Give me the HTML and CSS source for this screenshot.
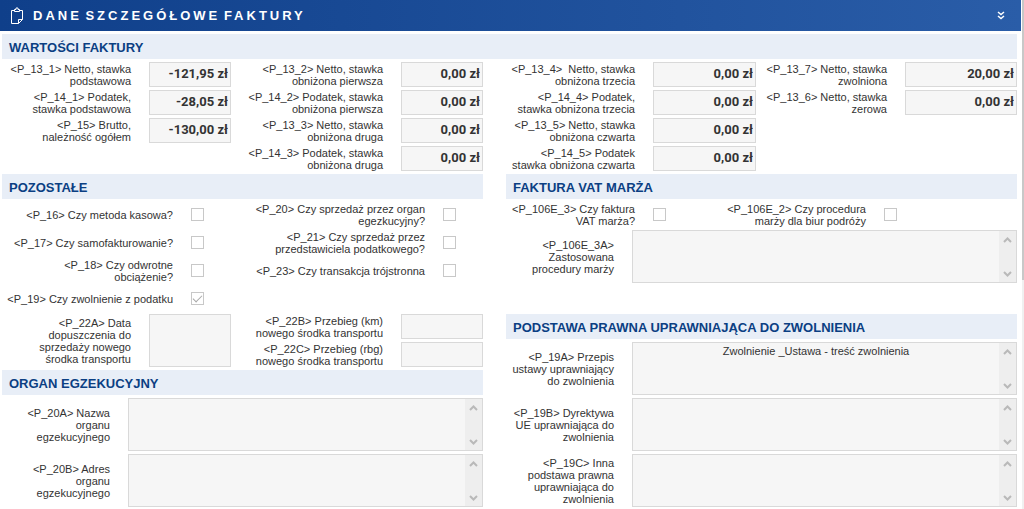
FILE: index.html
```html
<!DOCTYPE html>
<html lang="pl">
<head>
<meta charset="utf-8">
<title>Dane szczegółowe faktury</title>
<link rel="stylesheet" href="styles.css">
</head>
<body>
<svg class="defs" width="0" height="0" aria-hidden="true">
  <symbol id="up" viewBox="0 0 9 6"><path d="M1 5 4.500 1.500 8 5" fill="none" stroke="#b9b9b9" stroke-width="2"/></symbol>
  <symbol id="down" viewBox="0 0 9 6"><path d="M1 1 4.500 4.500 8 1" fill="none" stroke="#b9b9b9" stroke-width="2"/></symbol>
</svg>
<div class="page">
<div class="panel">
  <header class="bar">
    <svg class="bar-icon" viewBox="0 0 14 18" width="14" height="18" aria-hidden="true">
      <path d="M4 3.500H1.500V16.500H8.500L12.500 12.500V3.500H10M8.500 16.500V12.500H12.500" fill="none" stroke="#fff"/>
      <path d="M4.500 4.500V2.500H6V1H8V2.500H9.500V4.500Z" fill="none" stroke="#fff"/>
    </svg>
    <h1 class="bar-title">DANE SZCZEGÓŁOWE FAKTURY</h1>
    <button class="bar-toggle" type="button" aria-label="Zwiń">
      <svg viewBox="0 0 8 10" width="8" height="10" aria-hidden="true"><path d="M1 1 4 3.500 7 1M1 5 4 7.500 7 5" fill="none" stroke="#fff" stroke-width="1.500"/></svg>
    </button>
  </header>
  <main class="form">
    <h2 class="heading heading-wide">WARTOŚCI FAKTURY</h2>

    <div class="column">
      <div class="fields fields-left amounts">
        <label for="p131">&lt;P_13_1&gt; Netto, stawka<br>podstawowa</label><input id="p131" class="box" value="-121,95 zł" readonly>
        <label for="p132">&lt;P_13_2&gt; Netto, stawka<br>obniżona pierwsza</label><input id="p132" class="box" value="0,00 zł" readonly>
        <label for="p141">&lt;P_14_1&gt; Podatek,<br>stawka podstawowa</label><input id="p141" class="box" value="-28,05 zł" readonly>
        <label for="p142">&lt;P_14_2&gt; Podatek, stawka<br>obniżona pierwsza</label><input id="p142" class="box" value="0,00 zł" readonly>
        <label for="p15">&lt;P_15&gt; Brutto,<br>należność ogółem</label><input id="p15" class="box" value="-130,00 zł" readonly>
        <label for="p133">&lt;P_13_3&gt; Netto, stawka<br>obniżona druga</label><input id="p133" class="box" value="0,00 zł" readonly>
        <label class="second" for="p143">&lt;P_14_3&gt; Podatek, stawka<br>obniżona druga</label><input id="p143" class="box" value="0,00 zł" readonly>
      </div>
      <h2 class="heading">POZOSTAŁE</h2>
      <div class="fields checks-left">
        <label for="p16">&lt;P_16&gt; Czy metoda kasowa?</label><input id="p16" class="check" type="checkbox" disabled>
        <label for="p20">&lt;P_20&gt; Czy sprzedaż przez organ<br>egezkucyjny?</label><input id="p20" class="check" type="checkbox" disabled>
        <label for="p17">&lt;P_17&gt; Czy samofakturowanie?</label><input id="p17" class="check" type="checkbox" disabled>
        <label for="p21">&lt;P_21&gt; Czy sprzedaż przez<br>przedstawiciela podatkowego?</label><input id="p21" class="check" type="checkbox" disabled>
        <label for="p18">&lt;P_18&gt; Czy odwrotne<br>obciążenie?</label><input id="p18" class="check" type="checkbox" disabled>
        <label for="p23">&lt;P_23&gt; Czy transakcja trójstronna</label><input id="p23" class="check" type="checkbox" disabled>
        <label for="p19">&lt;P_19&gt; Czy zwolnienie z podatku</label><input id="p19" class="check" type="checkbox" checked disabled>
      </div>
      <div class="fields fields-left">
        <label class="tall" for="p22a">&lt;P_22A&gt; Data<br>dopuszczenia do<br>sprzedaży nowego<br>środka transportu</label><input id="p22a" class="box tall" readonly>
        <label for="p22b">&lt;P_22B&gt; Przebieg (km)<br>nowego środka transportu</label><input id="p22b" class="box" readonly>
        <label for="p22c">&lt;P_22C&gt; Przebieg (rbg)<br>nowego środka transportu</label><input id="p22c" class="box" readonly>
      </div>
      <h2 class="heading">ORGAN EGZEKUCYJNY</h2>
      <div class="fields areas-left">
        <label for="p20a">&lt;P_20A&gt; Nazwa<br>organu<br>egzekucyjnego</label>
        <div class="area"><textarea id="p20a" readonly></textarea><div class="scroll"><svg><use href="#up"/></svg><svg><use href="#down"/></svg></div></div>
        <label for="p20b">&lt;P_20B&gt; Adres<br>organu<br>egzekucyjnego</label>
        <div class="area"><textarea id="p20b" readonly></textarea><div class="scroll"><svg><use href="#up"/></svg><svg><use href="#down"/></svg></div></div>
      </div>
    </div>

    <div class="column">
      <div class="fields fields-right amounts">
        <label for="p134">&lt;P_13_4&gt;&nbsp; Netto, stawka<br>obniżona trzecia</label><input id="p134" class="box" value="0,00 zł" readonly>
        <label for="p137">&lt;P_13_7&gt; Netto, stawka<br>zwolniona</label><input id="p137" class="box" value="20,00 zł" readonly>
        <label for="p144">&lt;P_14_4&gt; Podatek,<br>stawka obniżona trzecia</label><input id="p144" class="box" value="0,00 zł" readonly>
        <label for="p136">&lt;P_13_6&gt; Netto, stawka<br>zerowa</label><input id="p136" class="box" value="0,00 zł" readonly>
        <label class="first" for="p135">&lt;P_13_5&gt; Netto, stawka<br>obniżona czwarta</label><input id="p135" class="box" value="0,00 zł" readonly>
        <label class="first" for="p145">&lt;P_14_5&gt; Podatek<br>stawka obniżona czwarta</label><input id="p145" class="box" value="0,00 zł" readonly>
      </div>
      <h2 class="heading">FAKTURA VAT MARŻA</h2>
      <div class="fields checks-right">
        <label for="p106e3">&lt;P_106E_3&gt; Czy faktura<br>VAT marża?</label><input id="p106e3" class="check" type="checkbox" disabled>
        <label for="p106e2">&lt;P_106E_2&gt; Czy procedura<br>marży dla biur podróży</label><input id="p106e2" class="check" type="checkbox" disabled>
      </div>
      <div class="fields areas-right">
        <label for="p106e3a">&lt;P_106E_3A&gt;<br>Zastosowana<br>procedury marży</label>
        <div class="area"><textarea id="p106e3a" readonly></textarea><div class="scroll"><svg><use href="#up"/></svg><svg><use href="#down"/></svg></div></div>
      </div>
      <h2 class="heading heading-apart">PODSTAWA PRAWNA UPRAWNIAJĄCA DO ZWOLNIENIA</h2>
      <div class="fields areas-right">
        <label for="p19a">&lt;P_19A&gt; Przepis<br>ustawy uprawniający<br>do zwolnienia</label>
        <div class="area"><textarea id="p19a" readonly>Zwolnienie _Ustawa - treść zwolnienia</textarea><div class="scroll"><svg><use href="#up"/></svg><svg><use href="#down"/></svg></div></div>
        <label for="p19b">&lt;P_19B&gt; Dyrektywa<br>UE uprawniająca do<br>zwolnienia</label>
        <div class="area"><textarea id="p19b" readonly></textarea><div class="scroll"><svg><use href="#up"/></svg><svg><use href="#down"/></svg></div></div>
        <label for="p19c">&lt;P_19C&gt; Inna<br>podstawa prawna<br>uprawniająca do<br>zwolnienia</label>
        <div class="area"><textarea id="p19c" readonly></textarea><div class="scroll"><svg><use href="#up"/></svg><svg><use href="#down"/></svg></div></div>
      </div>
    </div>
  </main>
</div>
<div class="page-scroll"><div class="page-thumb"></div></div>
</div>
</body>
</html>
```
FILE: styles.css
```css
* { box-sizing: border-box; }

body {
  margin: 0;
  background: #fff;
  color: #333;
  font: 11px/12px "Liberation Sans", Arial, sans-serif;
}

.defs { display: none; }

.page { display: flex; min-height: 100vh; }
.panel { flex: 1; min-width: 0; }

.page-scroll { width: 2px; margin-left: 1px; background: #f0f0f0; }
.page-thumb { height: 55%; background: #c8c8c8; }

.bar {
  display: flex;
  align-items: center;
  height: 31px;
  padding: 0 16px 0 10px;
  background: linear-gradient(90deg, #0f3f8a, #2a5da8);
  color: #fff;
}
.bar-title {
  flex: 1;
  margin: 0 0 0 9px;
  padding-top: 1px;
  font: bold 13px/16px "Liberation Sans", Arial, sans-serif;
  letter-spacing: 3px;
  word-spacing: -3px;
}
.bar-toggle {
  display: flex;
  padding: 0;
  border: 0;
  background: none;
}

.form {
  display: grid;
  grid-template-columns: minmax(0, 481fr) minmax(0, 511fr);
  gap: 3px 23px;
  padding: 3px 4px 2px 2px;
}
.column { display: flex; flex-direction: column; gap: 3px; min-width: 0; }

.heading {
  margin: 0;
  padding: 2px 7px 0;
  background: #e8eef7;
  color: #0b3f83;
  font: bold 13px/23px "Liberation Sans", Arial, sans-serif;
  white-space: nowrap;
}
.heading-wide { grid-column: 1 / -1; }
.heading-apart { margin-top: 28px; }

.fields { display: grid; grid-auto-rows: 25px; gap: 3px 0; align-items: center; }
.fields-left { grid-template-columns: minmax(0, 147fr) minmax(0, 82fr) minmax(0, 170fr) minmax(0, 82fr); }
.fields-right { grid-template-columns: minmax(0, 147fr) minmax(0, 103fr) minmax(0, 149fr) minmax(0, 112fr); }
.checks-left { grid-template-columns: minmax(0, 189fr) minmax(0, 40fr) minmax(0, 212fr) minmax(0, 40fr); }
.checks-right { grid-template-columns: minmax(0, 147fr) minmax(0, 83fr) minmax(0, 148fr) minmax(0, 133fr); }
.areas-left { grid-template-columns: minmax(0, 126fr) minmax(0, 355fr); grid-auto-rows: 53px; }
.areas-right { grid-template-columns: minmax(0, 126fr) minmax(0, 385fr); grid-auto-rows: 53px; }

label { padding-right: 18px; text-align: right; white-space: nowrap; justify-self: end; }
.first { grid-column: 1; }
.second { grid-column: 3; }
.tall { grid-row: span 2; }

.box, .area {
  width: 100%;
  height: 100%;
  min-width: 0;
  border: 1px solid #d9d9d9;
  background: #f6f6f6;
}
.box {
  padding: 0 2px 2px;
  border-radius: 0;
  color: #333;
  font: bold 13px/16px Roboto, "Liberation Sans", sans-serif;
  text-align: right;
}

.check {
  display: grid;
  place-items: center;
  appearance: none;
  width: 13px;
  height: 13px;
  margin: 0;
  border: 1px solid #c8c8c8;
  background: #fff;
}
.check:checked::after {
  content: "";
  width: 8px;
  height: 4px;
  margin-bottom: 3px;
  border: solid #a8a8a8;
  border-width: 0 0 1px 1px;
  transform: rotate(-45deg);
}

.area { display: flex; }
.area textarea {
  flex: 1;
  min-width: 0;
  padding: 2px 0;
  border: 0;
  background: none;
  color: #333;
  font: 11px/12px "Liberation Sans", Arial, sans-serif;
  text-align: center;
  resize: none;
  overflow: hidden;
}
.scroll {
  display: flex;
  flex-direction: column;
  align-items: center;
  justify-content: space-between;
  width: 17px;
  padding: 6px 0 5px;
  background: #eee;
}
.scroll svg { width: 9px; height: 6px; }
```
